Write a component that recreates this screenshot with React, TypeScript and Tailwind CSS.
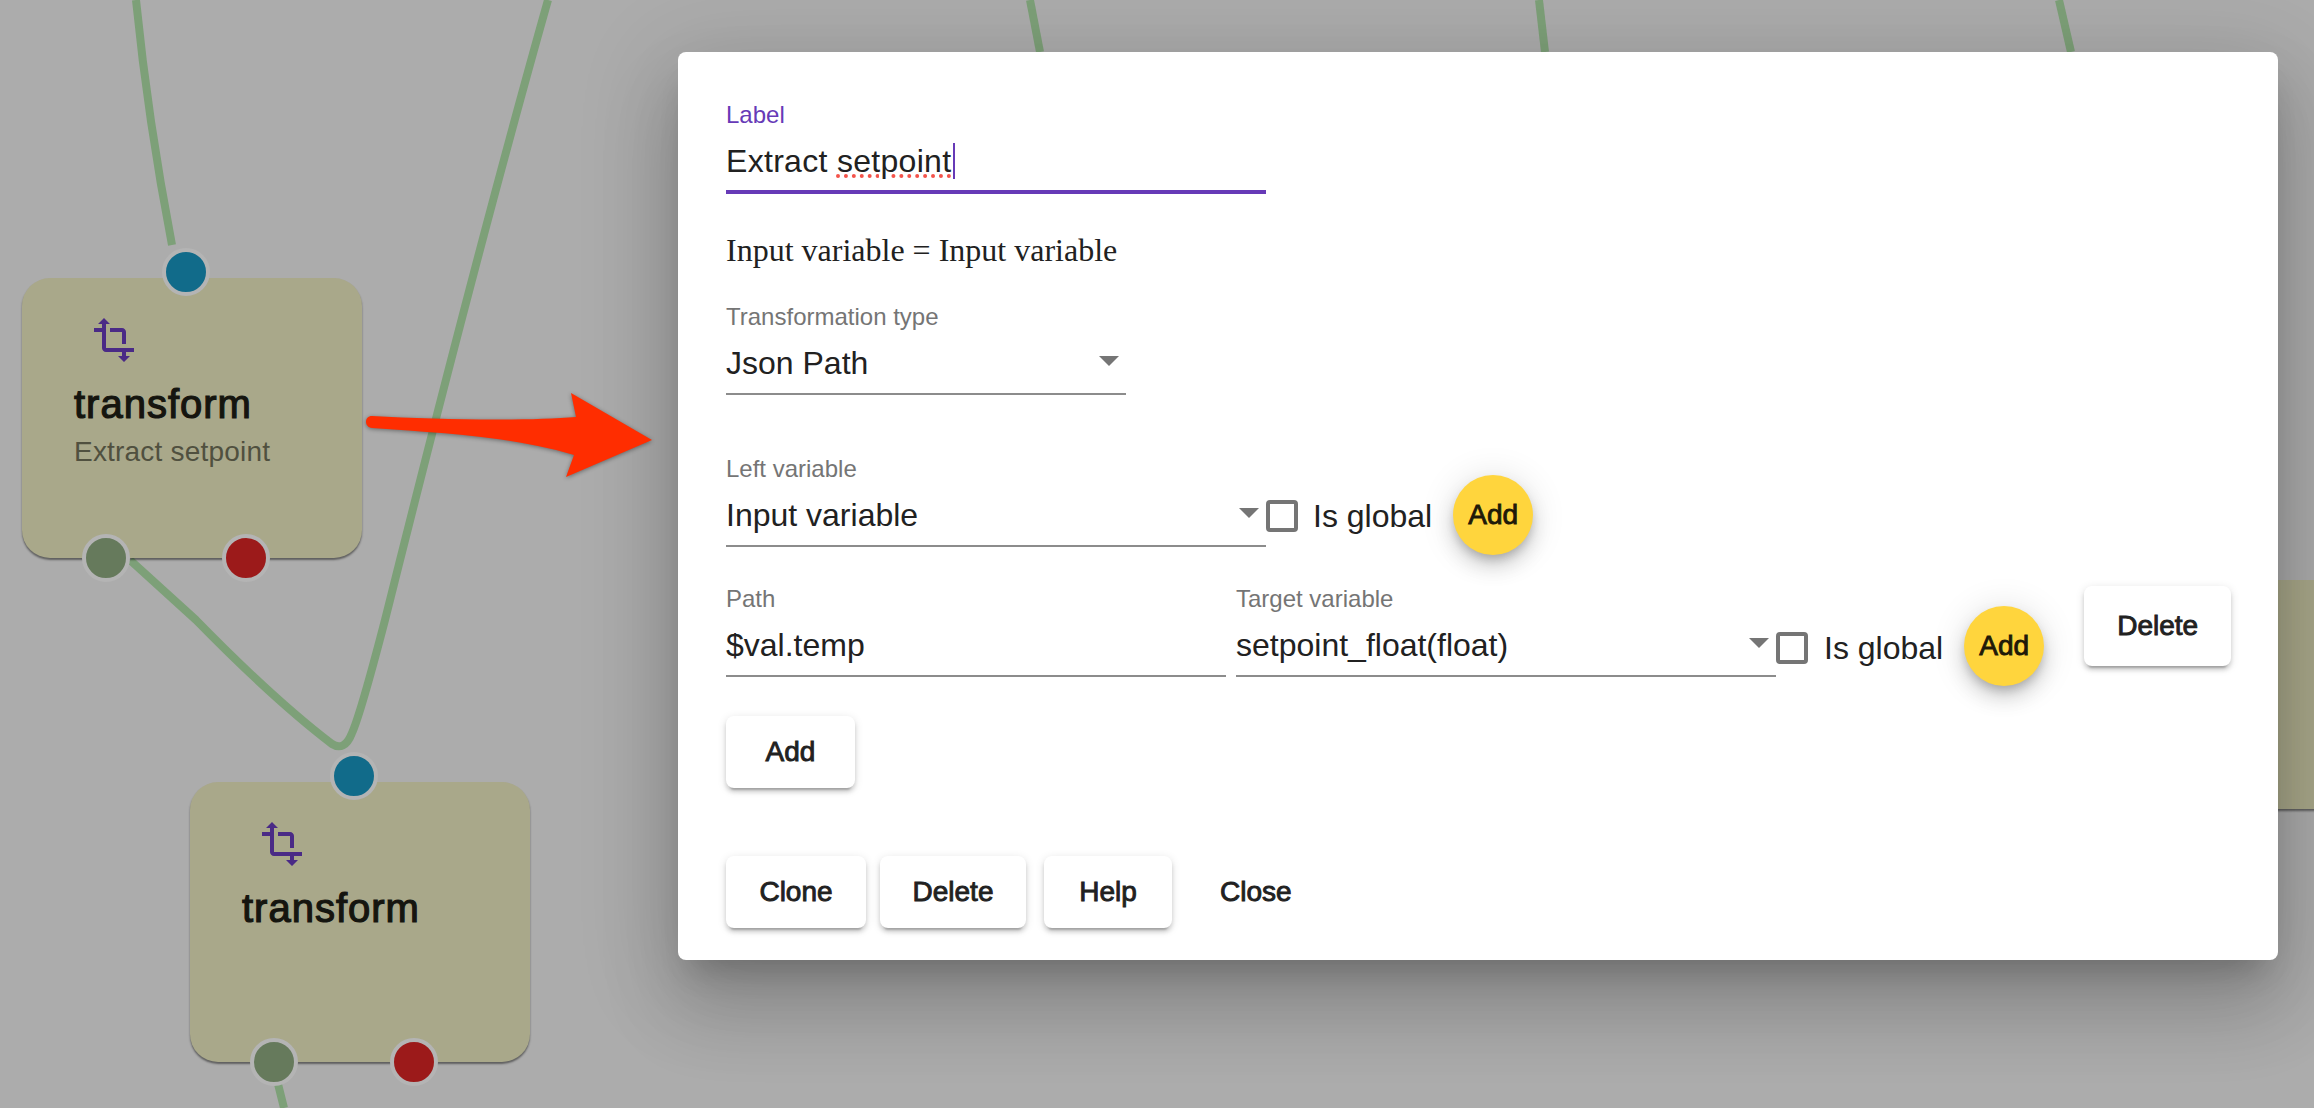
const raised = 'shadow-[0_6px_2px_-4px_rgba(0,0,0,0.2),0_4px_4px_0_rgba(0,0,0,0.14),0_2px_10px_0_rgba(0,0,0,0.12)]'
const medium = '[-webkit-text-stroke:0.9px_currentColor]'

function TransformIcon() {
  return (
    <svg viewBox="0 0 24 24" className="w-12 h-12 fill-[#4a2a86]">
      <path d="M22 18v-2H8V4h2L7 1 4 4h2v2H2v2h4v8c0 1.1.9 2 2 2h8v2h-2l3 3 3-3h-2v-2h4zM10 8h6v6h2V8c0-1.1-.9-2-2-2h-6v2z" />
    </svg>
  )
}

function Port({ className }: { className: string }) {
  return <div className={`absolute w-12 h-12 rounded-full border-4 border-[#b4b4b4] ${className}`} />
}

function GraphNode({ subtitle, className }: { subtitle?: string; className: string }) {
  return (
    <div className={`absolute w-[340px] h-[280px] rounded-[28px] bg-[#a9a88a] shadow-[0_2px_2px_rgba(0,0,0,0.45)] pl-[52px] pt-[38px] ${className}`}>
      <div className="ml-4">
        <TransformIcon />
      </div>
      <div className="mt-[18px] text-[40px] leading-[44px] tracking-[1px] [-webkit-text-stroke:1.2px_currentColor] text-[#15150f]">transform</div>
      {subtitle && <div className="mt-[8px] text-[28px] leading-[36px] tracking-[0.2px] text-[#50503f]">{subtitle}</div>}
      <Port className="left-[140px] -top-[30px] bg-[#116b8a]" />
      <Port className="left-[60px] -bottom-6 bg-[#667a5c]" />
      <Port className="left-[200px] -bottom-6 bg-[#9c1a1a]" />
    </div>
  )
}

function Field({ label, value, width, arrow }: { label: string; value: string; width: string; arrow?: boolean }) {
  return (
    <div className={`shrink-0 ${width}`}>
      <div className="h-[30px] text-[24px] leading-[28px] text-[#757575]">{label}</div>
      <div className="relative h-[62px] border-b-2 border-[#8c8c8c] text-[32px] leading-[60px] text-[#212121]">
        {value}
        {arrow && (
          <div className="absolute right-[7px] top-[23px] w-0 h-0 border-x-[10px] border-x-transparent border-t-[10px] border-t-[#757575]" />
        )}
      </div>
    </div>
  )
}

function IsGlobal({ top, gap }: { top: string; gap: string }) {
  return (
    <div className={`flex items-center shrink-0 ${top}`}>
      <div className="w-8 h-8 rounded-[4px] border-4 border-[#757575]" />
      <span className={`text-[32px] leading-8 text-[#212121] ${gap}`}>Is global</span>
    </div>
  )
}

function Fab({ top }: { top: string }) {
  return (
    <div className={`ml-[21px] w-20 h-20 shrink-0 rounded-full bg-[#ffd53d] flex items-center justify-center text-[28px] text-[#1f1a08] ${medium} shadow-[0_6px_10px_-2px_rgba(0,0,0,0.2),0_12px_20px_0_rgba(0,0,0,0.14),0_2px_36px_0_rgba(0,0,0,0.12)] ${top}`}>
      Add
    </div>
  )
}

function RaisedButton({ children, className }: { children: string; className: string }) {
  return (
    <div className={`rounded-lg bg-white flex items-center justify-center text-[28px] text-[#212121] ${medium} ${raised} ${className}`}>
      {children}
    </div>
  )
}

export default function App() {
  return (
    <div className="relative w-full h-screen overflow-hidden bg-[#acacac] font-['Liberation_Sans',sans-serif]">
      {/* edges between nodes */}
      <svg className="absolute inset-0" width="2314" height="1108" fill="none" stroke="#7da078" strokeWidth="8">
        <path d="M136 0 Q148 120 172 245" />
        <path d="M548 0 C500 170 440 400 385 620 C372 670 360 715 352 733 C347 746 340 749 332 744 C290 712 240 665 196 620 L130 560" />
        <path d="M278 1084 L284 1108" />
        <path d="M1030 0 L1040 52" />
        <path d="M1539 0 L1545 52" />
        <path d="M2059 0 L2071 52" />
      </svg>

      <GraphNode subtitle="Extract setpoint" className="left-[22px] top-[278px]" />
      <GraphNode className="left-[190px] top-[782px]" />
      <div className="absolute left-[2200px] top-[580px] w-[300px] h-[229px] bg-[#a9a88a] shadow-[0_2px_2px_rgba(0,0,0,0.45)]" />

      {/* dialog */}
      <div className="absolute left-[678px] top-[52px] w-[1600px] h-[908px] rounded-lg bg-white pl-12 pt-[49px] flex flex-col shadow-[0_22px_30px_-14px_rgba(0,0,0,0.2),0_48px_76px_6px_rgba(0,0,0,0.14),0_18px_92px_16px_rgba(0,0,0,0.12)]">
        <div className="w-[540px]">
          <div className="h-[30px] text-[24px] leading-[28px] text-[#673ab7]">Label</div>
          <div className="h-[63px] border-b-4 border-[#673ab7] text-[32px] leading-[60px] tracking-[0.3px] text-[#212121] flex items-center">
            <span>
              Extract <span className="underline decoration-dotted decoration-[#f4534a] decoration-4 underline-offset-[3px]">setpoint</span>
            </span>
            <span className="ml-[2px] w-[2px] h-9 bg-[#673ab7]" />
          </div>
        </div>

        <div className="mt-[36px] h-10 text-[32px] leading-10 text-[#212121] font-['Liberation_Serif',serif]">
          Input variable = Input variable
        </div>

        <div className="mt-[33px]">
          <Field label="Transformation type" value="Json Path" width="w-[400px]" arrow />
        </div>

        <div className="mt-[60px] flex items-start">
          <Field label="Left variable" value="Input variable" width="w-[540px]" arrow />
          <IsGlobal top="mt-[45px]" gap="ml-[15px]" />
          <Fab top="mt-[20px]" />
        </div>

        <div className="mt-[30px] flex items-start">
          <Field label="Path" value="$val.temp" width="w-[500px]" />
          <div className="ml-[10px]">
            <Field label="Target variable" value="setpoint_float(float)" width="w-[540px]" arrow />
          </div>
          <IsGlobal top="mt-[47px]" gap="ml-4" />
          <Fab top="mt-[21px]" />
          <RaisedButton className="ml-10 mt-px w-[147px] h-20">Delete</RaisedButton>
        </div>

        <RaisedButton className="mt-[30px] w-[129px] h-[72px]">Add</RaisedButton>

        <div className="mt-[68px] flex items-center">
          <RaisedButton className="w-[140px] h-[72px]">Clone</RaisedButton>
          <RaisedButton className="ml-[14px] w-[146px] h-[72px]">Delete</RaisedButton>
          <RaisedButton className="ml-[18px] w-[128px] h-[72px]">Help</RaisedButton>
          <div className={`ml-12 text-[28px] text-[#212121] ${medium}`}>Close</div>
        </div>
      </div>

      {/* annotation arrow */}
      <svg className="absolute inset-0 drop-shadow-[0_1px_2px_rgba(0,0,0,0.4)]" width="2314" height="1108">
        <path
          d="M372 416 C440 420 530 421 576 417 L571 393 L652 440 L566 477 L574 455 C510 436 440 433 372 428 C364 427 364 416 372 416 Z"
          fill="#ff2d00"
        />
      </svg>
    </div>
  )
}
